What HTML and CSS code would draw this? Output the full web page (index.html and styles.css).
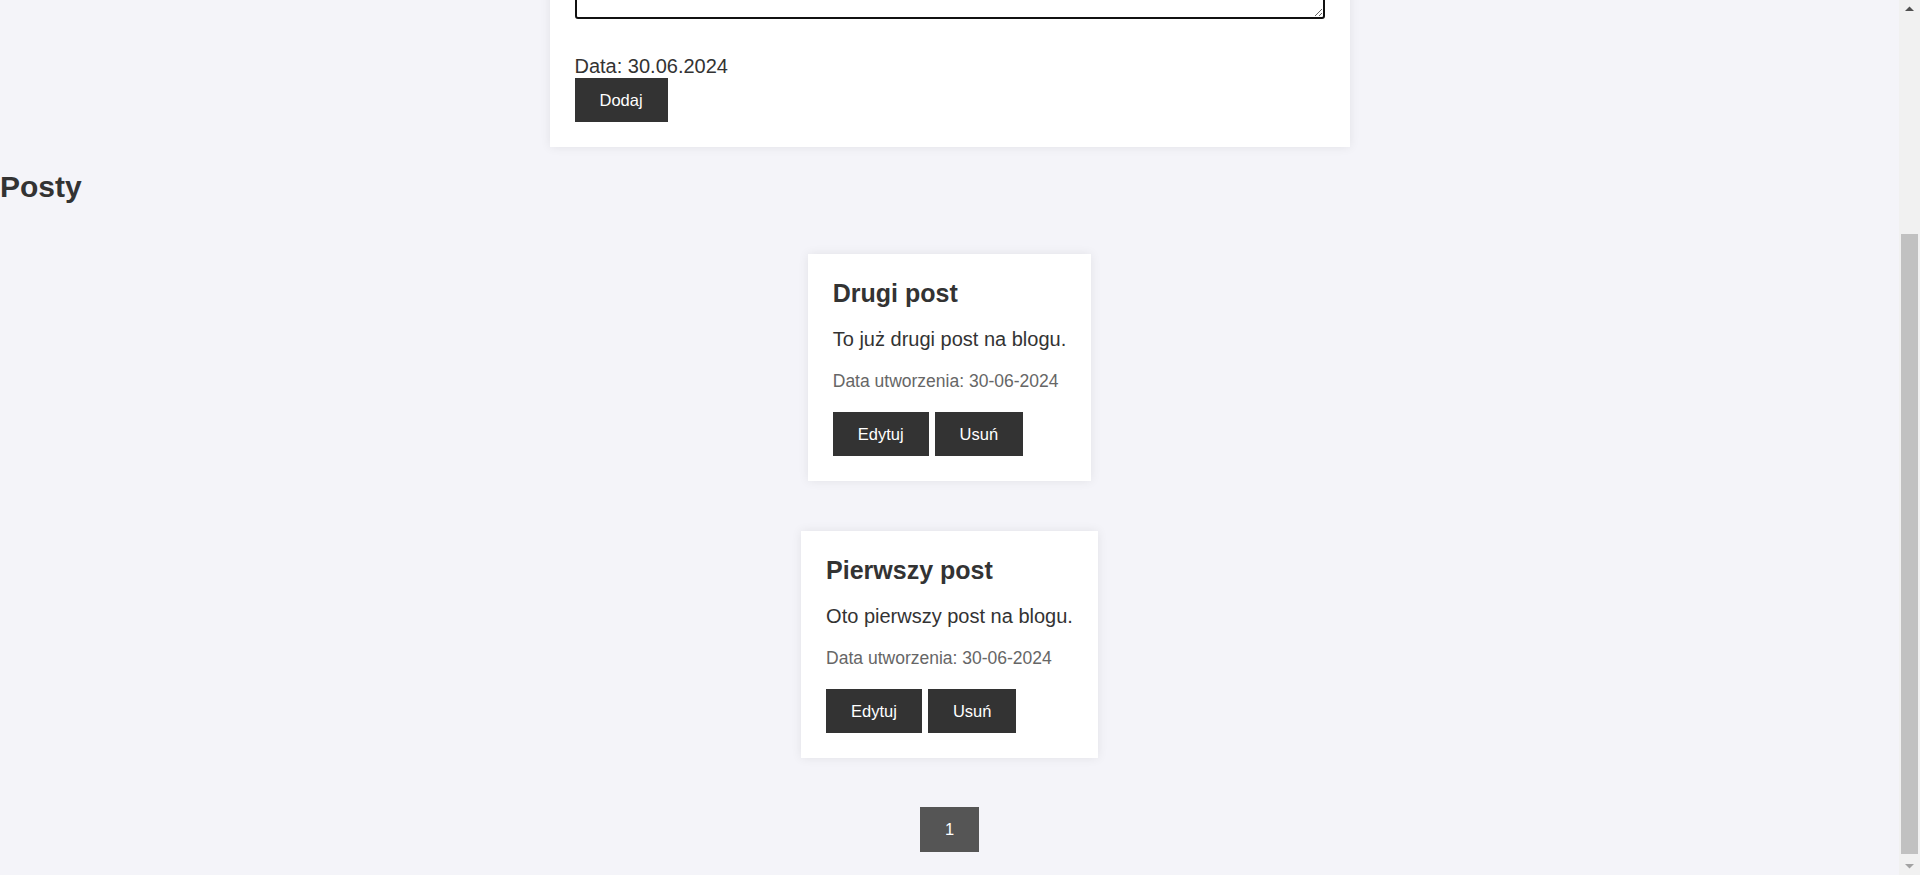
FILE: index.html
```html
<!DOCTYPE html>
<html lang="pl">
<head>
<meta charset="utf-8">
<title>Blog</title>
<link rel="stylesheet" href="styles.css">
</head>
<body>
  <main class="page">
    <section class="form-card">
      <h2 class="form-title">Dodaj nowy post</h2>
      <input class="title-input" type="text">
      <textarea class="content-input"></textarea>
      <div class="date-line">Data: 30.06.2024</div>
      <button class="btn">Dodaj</button>
    </section>

    <h2 class="section-title">Posty</h2>

    <div class="posts">
      <article class="post-card">
        <h3 class="post-title">Drugi post</h3>
        <p class="post-content">To już drugi post na blogu.</p>
        <p class="post-date">Data utworzenia: 30-06-2024</p>
        <div class="actions">
          <button class="btn">Edytuj</button>
          <button class="btn">Usuń</button>
        </div>
      </article>
      <article class="post-card">
        <h3 class="post-title">Pierwszy post</h3>
        <p class="post-content">Oto pierwszy post na blogu.</p>
        <p class="post-date">Data utworzenia: 30-06-2024</p>
        <div class="actions">
          <button class="btn">Edytuj</button>
          <button class="btn">Usuń</button>
        </div>
      </article>
    </div>

    <div class="pagination">
      <button class="btn page-btn">1</button>
    </div>
  </main>

  <div class="scrollbar" aria-hidden="true">
    <div class="sb-arrow">
      <svg width="21" height="21" viewBox="0 0 21 21"><polygon points="6,11 10.5,6.5 15,11" fill="#505050"/></svg>
    </div>
    <div class="sb-track">
      <div class="sb-thumb"></div>
    </div>
    <div class="sb-arrow">
      <svg width="21" height="21" viewBox="0 0 21 21"><polygon points="6,10 15,10 10.5,14.5" fill="#a3a3a3"/></svg>
    </div>
  </div>
  <script src="script.js"></script>
</body>
</html>
```

FILE: styles.css
```css
html {
  background: #f4f4f9;
}

body {
  margin: 0;
  padding-right: 21px;
  background: #f4f4f9;
  color: #333;
  font-family: "Liberation Sans", Arial, sans-serif;
  font-size: 20px;
}

.page {
  display: block;
}

.form-card {
  box-sizing: border-box;
  width: 800px;
  margin: 25px auto 0;
  padding: 25px;
  background: #fff;
  box-shadow: 0 0 10px rgba(0, 0, 0, 0.08);
}

.form-title {
  margin: 0 0 25px;
  font-size: 30px;
}

.title-input,
.content-input {
  display: block;
  box-sizing: border-box;
  width: 100%;
  border: 2px solid #111;
  border-radius: 3px;
  font-family: inherit;
  font-size: 17px;
  padding: 6px;
}

.title-input {
  height: 40px;
  margin: 0 0 12px;
}

.content-input {
  height: 156px;
  margin: 0 0 36px;
  resize: vertical;
}

.date-line {
  font-size: 20px;
  line-height: 23px;
}

.btn {
  display: inline-block;
  border: 0;
  border-radius: 0;
  padding: 12.5px 25px;
  background: #333;
  color: #fff;
  font-family: "Liberation Sans", Arial, sans-serif;
  font-size: 16.5px;
  line-height: 19px;
  cursor: pointer;
}

.section-title {
  margin: 23px 0 25px;
  font-size: 30px;
}

.posts {
  display: flex;
  flex-direction: column;
  align-items: center;
}

.post-card {
  margin: 25px 0;
  padding: 25px;
  background: #fff;
  box-shadow: 0 0 10px rgba(0, 0, 0, 0.08);
}

.post-title {
  margin: 0 0 20px;
  font-size: 25px;
}

.post-content {
  margin: 0 0 20px;
  font-size: 20px;
}

.post-date {
  margin: 0 0 20px;
  font-size: 17.5px;
  color: #666;
}

.actions {
  display: flex;
  gap: 6px;
}

.pagination {
  display: flex;
  justify-content: center;
  margin: 24px 0 23px;
}

.page-btn {
  background: #555;
  padding: 13px 25px;
}

/* window scrollbar (drawn over the right edge) */
.scrollbar {
  position: fixed;
  top: 0;
  right: 0;
  width: 21px;
  height: 100%;
  display: flex;
  flex-direction: column;
  background: #f1f1f1;
}

.sb-arrow {
  height: 21px;
  flex: none;
}

.sb-arrow svg {
  display: block;
}

.sb-track {
  flex: 1;
  display: flex;
  flex-direction: column;
  justify-content: flex-end;
}

.sb-thumb {
  height: 620px;
  margin: 0 2px;
  background: #c1c1c1;
}
```

FILE: script.js
```js
function toBottom() {
  window.scrollTo(0, document.documentElement.scrollHeight);
}
toBottom();
window.addEventListener('load', toBottom);
```
